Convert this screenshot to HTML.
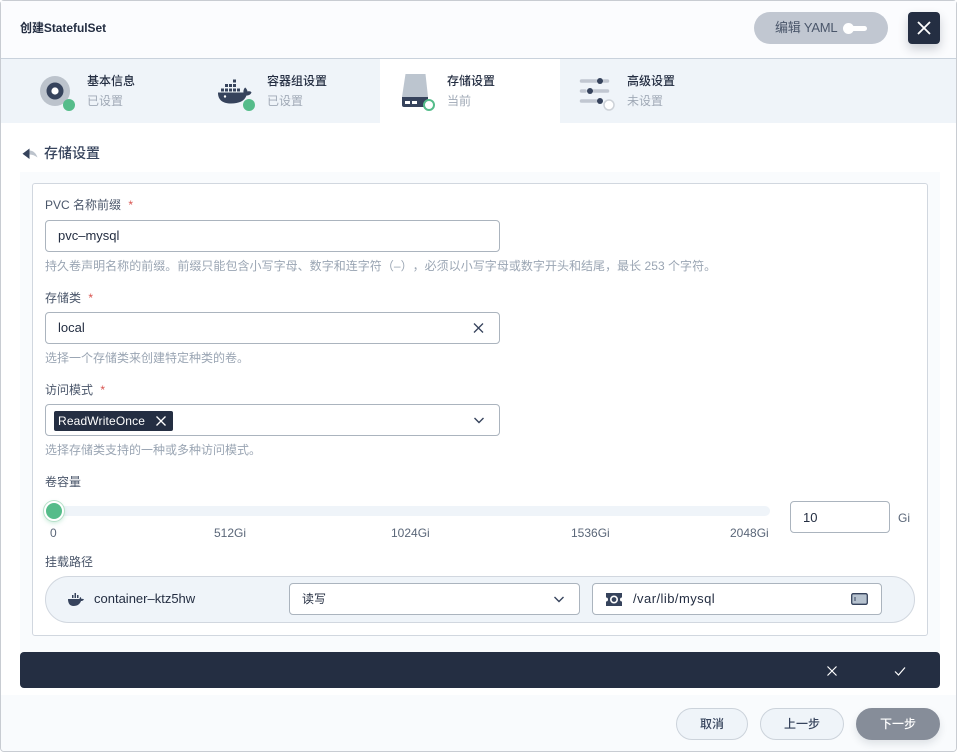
<!DOCTYPE html>
<html lang="zh"><head><meta charset="utf-8"><title>创建StatefulSet</title>
<style>
*{box-sizing:border-box}
html,body{margin:0;padding:0;width:957px;height:752px;overflow:hidden;background:#fff}
body{font-family:"Liberation Sans","Noto Sans CJK SC",sans-serif;font-size:12px;color:#242e42;position:relative;text-spacing-trim:space-all}
.a{position:absolute;white-space:nowrap}
.box{position:absolute;background:#fff;border:1px solid #abb4be;border-radius:4px}
.lab{color:#4a566a;line-height:16px}
.lab i{font-style:normal;color:#d8534f;margin-left:4px}
.hint{color:#9aa5b3;line-height:16px;font-size:12px}
.val{color:#242e42;line-height:16px;font-size:13px}
.t1{font-weight:500;line-height:16px;color:#242e42}
.t2{line-height:16px;color:#a0a9b6}
.tk{color:#5a6678;line-height:14px}
.btn{position:absolute;top:708px;height:32px;border-radius:16px;border:1px solid #ccd3db;background:#eff4f9;text-align:center;line-height:30px;font-weight:500;color:#36435c}
</style></head><body>
<div class="a" style="left:0;top:0;width:957px;height:752px;border:1px solid #c8ccd2;border-radius:4px;background:#fff"></div>
<div class="a" style="left:1px;top:1px;width:955px;height:57px;background:#fbfcfe"></div>
<div class="a" style="left:1px;top:58px;width:955px;height:1px;background:#c9d2dc"></div>
<div class="a t1" style="left:20px;top:20px;font-weight:700;letter-spacing:-.05px">创建StatefulSet</div>
<div class="a" style="left:754px;top:12px;width:134px;height:32px;border-radius:16px;background:#c1c7d1"></div>
<div class="a" style="left:775px;top:20px;line-height:16px;color:#4a566a;font-size:13px;letter-spacing:-.25px">编辑 YAML</div>
<div class="a" style="left:851px;top:26px;width:16px;height:5px;border-radius:3px;background:#fff"></div>
<div class="a" style="left:843px;top:23px;width:11px;height:11px;border-radius:50%;background:#fff"></div>
<div class="a" style="left:908px;top:12px;width:32px;height:32px;border-radius:4px;background:#242e42;box-shadow:0 5px 10px rgba(36,46,66,.22)"></div>
<svg class="a" style="left:908px;top:12px" width="32" height="32"><path d="M10 10L22 22M22 10L10 22" stroke="#fff" stroke-width="1.800" fill="none"/></svg>

<div class="a" style="left:1px;top:59px;width:955px;height:64px;background:#eff4f9"></div>
<div class="a" style="left:380px;top:59px;width:180px;height:64px;background:#fff"></div>

<svg class="a" style="left:40px;top:76px" width="36" height="36">
<circle cx="15" cy="15" r="15" fill="#bcc3cc"/><circle cx="15" cy="15" r="8.500" fill="#36435c"/><circle cx="15" cy="15" r="3.600" fill="#fff"/>
<circle cx="29" cy="29" r="6" fill="#55bc8a"/></svg>
<div class="a t1" style="left:87px;top:73px">基本信息</div>
<div class="a t2" style="left:87px;top:93px">已设置</div>

<svg class="a" style="left:216px;top:76px" width="42" height="36">
<g fill="#36435c">
<rect x="17" y="3.500" width="3" height="3"/>
<rect x="9" y="8" width="3" height="3"/><rect x="13" y="8" width="3" height="3"/><rect x="17" y="8" width="3" height="3"/>
<rect x="5" y="12.500" width="3" height="3"/><rect x="9" y="12.500" width="3" height="3"/><rect x="13" y="12.500" width="3" height="3"/><rect x="17" y="12.500" width="3" height="3"/><rect x="21" y="12.500" width="3" height="3"/>
<path d="M2 16.500H27.500C27.200 14.500 28 12.500 29.200 11.500C30.500 12.500 31.300 14 31.500 15.500C33.500 15 35 15.300 35.500 16.500C34.500 18.800 32.500 19.500 30.500 19.500C28.500 25 23 27.500 15 27.500C7 27.500 1.800 24 2 16.500Z"/></g>
<circle cx="9" cy="20.500" r="1.200" fill="#fff"/>
<circle cx="33" cy="29" r="6" fill="#55bc8a"/></svg>
<div class="a t1" style="left:267px;top:73px">容器组设置</div>
<div class="a t2" style="left:267px;top:93px">已设置</div>

<svg class="a" style="left:400px;top:72px" width="38" height="40">
<path d="M5.500 2H25.500L28 25H2Z" fill="#bcc5cf"/>
<path d="M2 25H28V33Q28 35 26 35H4Q2 35 2 33Z" fill="#36435c"/>
<rect x="5" y="29" width="5" height="3" fill="#fff"/><rect x="12" y="29" width="5" height="3" fill="#fff"/>
<circle cx="29" cy="33" r="5" fill="#fff" stroke="#55bc8a" stroke-width="2"/></svg>
<div class="a t1" style="left:447px;top:73px">存储设置</div>
<div class="a t2" style="left:447px;top:93px">当前</div>

<svg class="a" style="left:578px;top:74px" width="40" height="38">
<g stroke="#c1c7d1" stroke-width="3.500" stroke-linecap="round" fill="none">
<path d="M3.500 7H18M26 7H29.500M3.500 17H7M16 17H29.500M3.500 27H18"/></g>
<g fill="#36435c"><circle cx="22" cy="7" r="3"/><circle cx="12" cy="17" r="3"/><circle cx="22" cy="27" r="3"/></g>
<circle cx="31" cy="31" r="5" fill="#fff" stroke="#cdd2d8" stroke-width="1.500"/></svg>
<div class="a t1" style="left:627px;top:73px">高级设置</div>
<div class="a t2" style="left:627px;top:93px">未设置</div>

<svg class="a" style="left:22px;top:147px" width="18" height="14">
<path d="M7.500 1.500V12L0.500 6.800Z" fill="#36435c"/><path d="M7.500 3.500C11 3.500 14 6 15.500 10.500C13 8.500 10.500 7.500 7.500 7.500Z" fill="#bcc3cc"/></svg>
<div class="a" style="left:44px;top:144px;font-size:14px;font-weight:500;line-height:18px;color:#36435c">存储设置</div>

<div class="a" style="left:20px;top:172px;width:920px;height:480px;background:#f9fbfd"></div>
<div class="a" style="left:32px;top:183px;width:896px;height:453px;background:#fff;border:1px solid #d1d7df;border-radius:3px"></div>

<div class="a lab" style="left:45px;top:197px">PVC 名称前缀 <i>*</i></div>
<div class="box" style="left:45px;top:220px;width:455px;height:32px"></div>
<div class="a val" style="left:58px;top:228px">pvc–mysql</div>
<div class="a hint" style="left:45px;top:258px;letter-spacing:.03px">持久卷声明名称的前缀。前缀只能包含小写字母、数字和连字符（–），必须以小写字母或数字开头和结尾，最长 253 个字符。</div>

<div class="a lab" style="left:45px;top:290px">存储类 <i>*</i></div>
<div class="box" style="left:45px;top:312px;width:455px;height:32px"></div>
<div class="a val" style="left:58px;top:320px">local</div>
<svg class="a" style="left:472px;top:322px" width="14" height="12"><path d="M2 1.500L11 10.500M11 1.500L2 10.500" stroke="#36435c" stroke-width="1.300" fill="none"/></svg>
<div class="a hint" style="left:45px;top:350px">选择一个存储类来创建特定种类的卷。</div>

<div class="a lab" style="left:45px;top:382px">访问模式 <i>*</i></div>
<div class="box" style="left:45px;top:404px;width:455px;height:32px"></div>
<div class="a" style="left:54px;top:411px;width:119px;height:20px;background:#242e42;border-radius:2px"></div>
<div class="a" style="left:58px;top:413px;color:#fff;line-height:16px;letter-spacing:.15px">ReadWriteOnce</div>
<svg class="a" style="left:155px;top:415px" width="12" height="12"><path d="M1.500 1.500L10.500 10.500M10.500 1.500L1.500 10.500" stroke="#fff" stroke-width="1.300" fill="none"/></svg>
<svg class="a" style="left:472px;top:414px" width="14" height="12"><path d="M2.500 4L7 8.500L11.500 4" stroke="#36435c" stroke-width="1.400" fill="none"/></svg>
<div class="a hint" style="left:45px;top:442px">选择存储类支持的一种或多种访问模式。</div>

<div class="a lab" style="left:45px;top:474px">卷容量</div>
<div class="a" style="left:46px;top:506px;width:724px;height:10px;border-radius:5px;background:#eff4f9"></div>
<div class="a" style="left:44px;top:501px;width:20px;height:20px;border-radius:50%;background:#55bc8a;border:2px solid #fff;box-shadow:0 0 0 1px #b6e0c9,0 2px 5px rgba(85,188,138,.35)"></div>
<div class="a tk" style="left:50px;top:526px">0</div>
<div class="a tk" style="left:214px;top:526px">512Gi</div>
<div class="a tk" style="left:391px;top:526px">1024Gi</div>
<div class="a tk" style="left:571px;top:526px">1536Gi</div>
<div class="a tk" style="left:730px;top:526px">2048Gi</div>
<div class="box" style="left:790px;top:501px;width:100px;height:32px"></div>
<div class="a val" style="left:803px;top:510px">10</div>
<div class="a" style="left:898px;top:510px;line-height:16px;color:#5a6678">Gi</div>

<div class="a lab" style="left:45px;top:554px">挂载路径</div>
<div class="a" style="left:45px;top:576px;width:870px;height:47px;border-radius:24px;background:#eff4f9;border:1px solid #d1d7df"></div>
<svg class="a" style="left:67px;top:592px" width="18" height="15">
<g fill="#36435c"><rect x="5" y="3" width="1.500" height="3"/><rect x="7.500" y="1" width="1.500" height="5"/><rect x="10" y="3" width="1.500" height="3"/>
<path d="M1 7H12.500C12.500 6 13 5.500 13.500 5C14 5.500 14.300 6 14.400 7C15.500 6.800 16.500 7 17 7.500C16 8.800 15 9 14 9C13 12 10.500 14 6.500 14C3 14 1 11.500 1 7Z"/></g></svg>
<div class="a val" style="left:94px;top:591px">container–ktz5hw</div>
<div class="box" style="left:289px;top:583px;width:291px;height:32px"></div>
<div class="a val" style="left:302px;top:591px;font-size:12px">读写</div>
<svg class="a" style="left:552px;top:593px" width="14" height="12"><path d="M2.500 4L7 8.500L11.500 4" stroke="#36435c" stroke-width="1.400" fill="none"/></svg>
<div class="box" style="left:592px;top:583px;width:290px;height:32px"></div>
<svg class="a" style="left:606px;top:593px" width="16" height="13">
<path d="M0 0H16V4.500A2 2 0 0 0 16 8.500V13H0V8.500A2 2 0 0 0 0 4.500Z" fill="#36435c"/><circle cx="8" cy="6.500" r="3.200" fill="none" stroke="#fff" stroke-width="1.600"/></svg>
<div class="a val" style="left:633px;top:591px;letter-spacing:.45px">/var/lib/mysql</div>
<svg class="a" style="left:851px;top:593px" width="18" height="13">
<rect x=".7" y=".7" width="15.600" height="10.600" rx="1.500" fill="#b6c2cf" stroke="#36435c" stroke-width="1.300"/><rect x="3.500" y="4" width="1" height="4" fill="#36435c"/></svg>

<div class="a" style="left:20px;top:652px;width:920px;height:36px;border-radius:4px;background:#242e42"></div>
<svg class="a" style="left:825px;top:664px" width="14" height="14"><path d="M2.500 2.500L11.500 11.500M11.500 2.500L2.500 11.500" stroke="#fff" stroke-width="1.200" fill="none"/></svg>
<svg class="a" style="left:893px;top:664px" width="14" height="14"><path d="M2 7.500L5.500 11L12 3.500" stroke="#fff" stroke-width="1.200" fill="none"/></svg>

<div class="a" style="left:1px;top:695px;width:955px;height:56px;background:#f9fbfd;border-radius:0 0 3px 3px"></div>
<div class="btn" style="left:676px;width:72px">取消</div>
<div class="btn" style="left:760px;width:84px">上一步</div>
<div class="btn" style="left:856px;width:84px;background:#868d99;border-color:#868d99;color:#fff;box-shadow:0 4px 8px rgba(36,46,66,.12)">下一步</div>
</body></html>
